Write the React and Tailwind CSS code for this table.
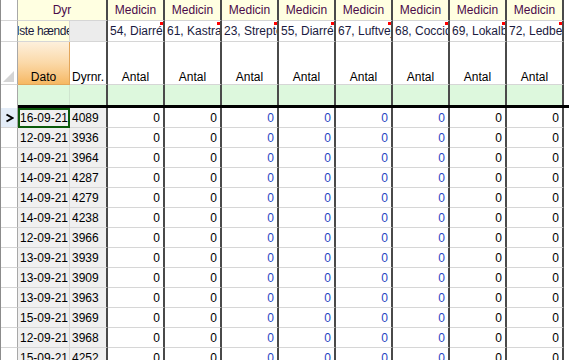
import React from "react";

const meds = [
  "54, Diarré, smågrise",
  "61, Kastration",
  "23, Streptokokker",
  "55, Diarré, fravænnede",
  "67, Luftvejsinfektion",
  "68, Coccidiose",
  "69, Lokalbehandling",
  "72, Ledbetændelse",
];

const rows = [
  ["16-09-21", "4089"],
  ["12-09-21", "3936"],
  ["14-09-21", "3964"],
  ["14-09-21", "4287"],
  ["14-09-21", "4279"],
  ["14-09-21", "4238"],
  ["12-09-21", "3966"],
  ["13-09-21", "3939"],
  ["13-09-21", "3909"],
  ["13-09-21", "3963"],
  ["15-09-21", "3969"],
  ["12-09-21", "3968"],
  ["15-09-21", "4252"],
];

const zeroColors = ["text-black", "text-black", "text-[#1f45c4]", "text-[#1f45c4]", "text-[#1f45c4]", "text-[#1f45c4]", "text-black", "text-black"];

export default function App() {
  return (
    <div className="w-[569px] h-[360px] overflow-hidden bg-white border-l border-[#8c8c8c] font-['Liberation_Sans',Arial,sans-serif] text-[12px] leading-[14px] text-black">
      <div className="w-[1000px]">
        {/* Row 1 */}
        <div className="flex h-[21px]">
          <div className="w-[17px] shrink-0 border-r border-b border-[#a8a8a8] border-b-[#d6d6d6] bg-white" />
          <div className="w-[90px] shrink-0 flex items-center justify-center bg-[#ffffe1] border-b border-[#d6d6d6] border-r-2 border-r-[#4a4a4a] text-[#4a0a4a]">
            Dyr
          </div>
          {meds.map((m, i) => (
            <div
              key={i}
              className="w-[57px] shrink-0 flex items-center justify-center bg-[#ffffe1] border-b border-[#d6d6d6] border-r-2 border-r-[#4a4a4a] text-[#4a0a4a]"
            >
              Medicin
            </div>
          ))}
        </div>
        {/* Row 2 */}
        <div className="flex h-[21px]">
          <div className="w-[17px] shrink-0 border-r border-b border-[#a8a8a8] border-b-[#d6d6d6] bg-white" />
          <div className="w-[52px] shrink-0 overflow-hidden flex items-center bg-[#ffffe1] border-b border-r border-[#d6d6d6] text-[#1a1a40]">
            <span className="whitespace-nowrap ml-[-15px] tracking-[-0.4px]">Sidste hændelse</span>
          </div>
          <div className="w-[38px] shrink-0 bg-[#ececec] border-b border-[#d6d6d6] border-r-2 border-r-[#4a4a4a]" />
          {meds.map((m, i) => (
            <div
              key={i}
              className="relative w-[57px] shrink-0 overflow-hidden flex items-center bg-white border-b border-[#d6d6d6] border-r-2 border-r-[#4a4a4a] text-[#1a1a40]"
            >
              <span className="whitespace-nowrap pl-[2px]">{m}</span>
              <div className="absolute top-[1px] right-0 w-[3px] h-[3px] bg-[#ff0000]" />
            </div>
          ))}
        </div>
        {/* Row 3 */}
        <div className="flex h-[43px]">
          <div className="relative w-[17px] shrink-0 border-r border-b border-[#a8a8a8] border-b-[#d6d6d6] bg-white">
            <svg className="absolute left-[2px] bottom-[2px]" width="11" height="11" viewBox="0 0 11 11">
              <polygon points="11,0 11,11 0,11" fill="#d4d4d4" />
            </svg>
          </div>
          <div className="w-[52px] shrink-0 flex items-end justify-center border-b border-r border-[#e3a65a] bg-gradient-to-b from-[#fdf0dc] via-[#fbd9a8] to-[#f6b862]">
            Dato
          </div>
          <div className="w-[38px] shrink-0 flex items-end justify-center bg-white border-b border-[#d6d6d6] border-r-2 border-r-[#4a4a4a]">
            Dyrnr.
          </div>
          {meds.map((m, i) => (
            <div
              key={i}
              className="w-[57px] shrink-0 flex items-end justify-center bg-white border-b border-[#d6d6d6] border-r-2 border-r-[#4a4a4a]"
            >
              Antal
            </div>
          ))}
        </div>
        {/* Green filter row */}
        <div className="flex h-[20px]">
          <div className="w-[17px] shrink-0 border-r border-[#a8a8a8] bg-white" />
          <div className="w-[52px] shrink-0 bg-[#ddf8dd] border-r border-[#cfe5cf]" />
          <div className="w-[38px] shrink-0 bg-[#ddf8dd] border-r-2 border-r-[#4a4a4a]" />
          {meds.map((m, i) => (
            <div key={i} className="w-[57px] shrink-0 bg-[#ddf8dd] border-r-2 border-r-[#4a4a4a]" />
          ))}
        </div>
        {/* Black separator */}
        <div className="flex h-[3px]">
          <div className="w-[17px] shrink-0 border-r border-[#a8a8a8] bg-white" />
          <div className="flex-1 bg-black" />
        </div>
        {/* Data rows */}
        {rows.map(([d, n], r) => (
          <div key={r} className="flex h-[20px]">
            <div
              className={
                "w-[17px] shrink-0 flex items-center justify-center border-r border-b border-[#a8a8a8] border-b-[#d6d6d6] " +
                (r === 0 ? "bg-[#e4edf8]" : "bg-white")
              }
            >
              {r === 0 && (
                <svg width="9" height="10" viewBox="0 0 9 10">
                  <polyline points="1.5,1.5 7.5,5 1.5,8.5" fill="none" stroke="#000" strokeWidth="2" />
                </svg>
              )}
            </div>
            <div
              className={
                "w-[52px] shrink-0 flex items-center pl-[2px] bg-[#f0f0f0] border-r border-b border-[#d6d6d6] " +
                (r === 0 ? "outline-2 outline-[#0b5a0b] -outline-offset-2" : "")
              }
            >
              {d}
            </div>
            <div className="w-[38px] shrink-0 flex items-center pl-[2px] bg-[#f0f0f0] border-b border-[#d6d6d6] border-r-2 border-r-[#4a4a4a]">
              {n}
            </div>
            {meds.map((m, i) => (
              <div
                key={i}
                className={
                  "w-[57px] shrink-0 flex items-center justify-end pr-[3px] bg-white border-b border-[#d6d6d6] border-r-2 border-r-[#4a4a4a] " +
                  zeroColors[i]
                }
              >
                0
              </div>
            ))}
          </div>
        ))}
      </div>
    </div>
  );
}
